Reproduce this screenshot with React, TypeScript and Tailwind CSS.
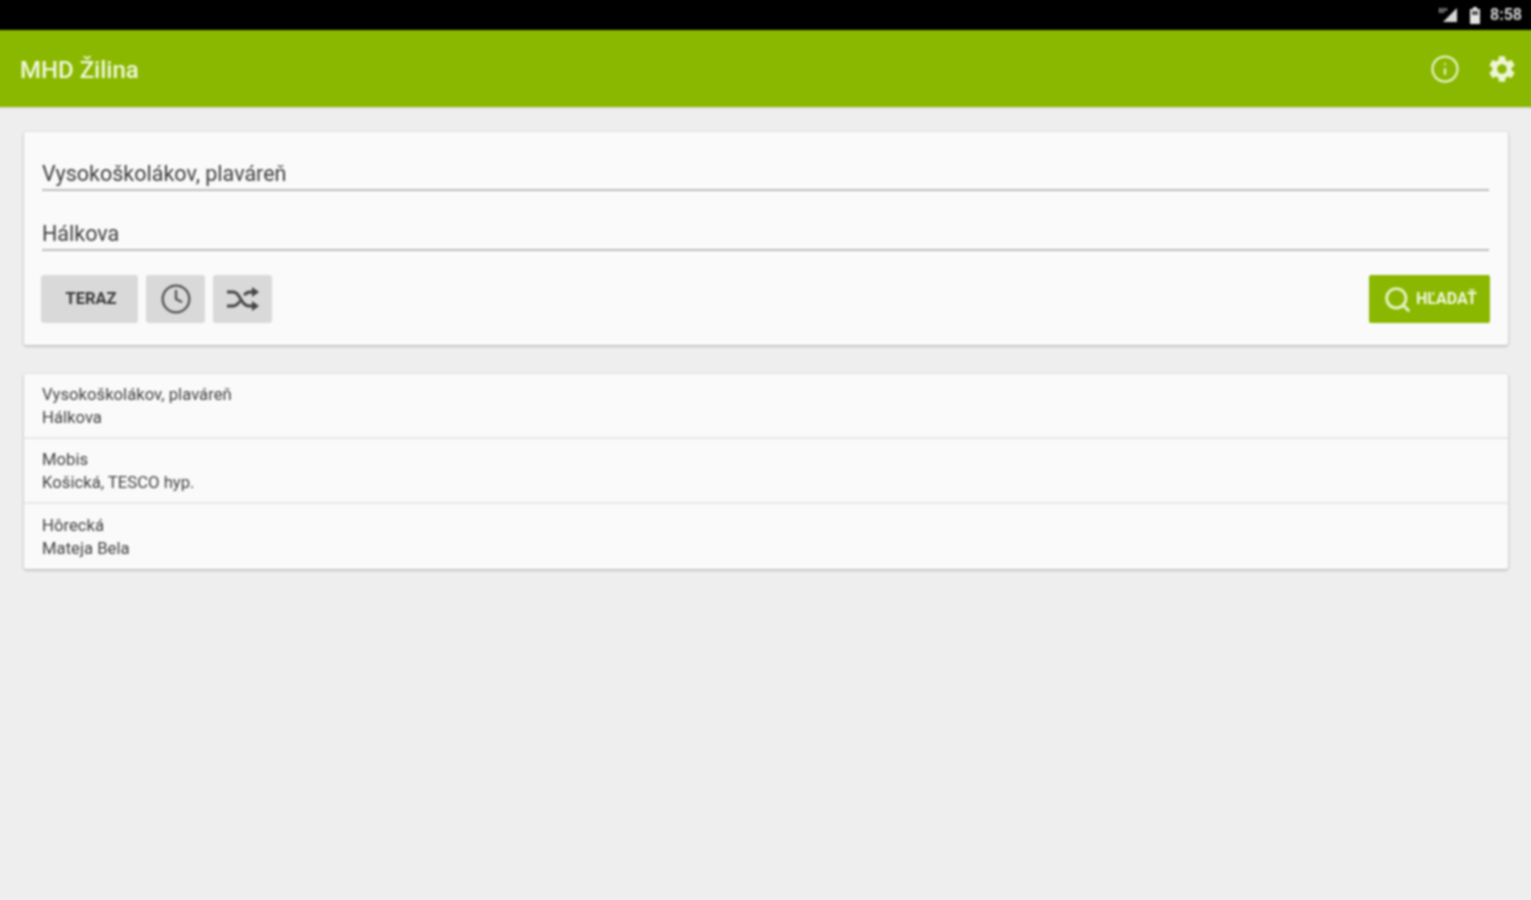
import { Clock, Info, Search } from 'lucide-react'
import { MdSettings } from 'react-icons/md'

const history = [
  { from: 'Vysokoškolákov, plaváreň', to: 'Hálkova' },
  { from: 'Mobis', to: 'Košická, TESCO hyp.' },
  { from: 'Hôrecká', to: 'Mateja Bela' },
]

function StatusBar() {
  return (
    <div className="h-[34px] pt-[4px] bg-black flex items-center justify-end pr-[13px]">
      {/* signal */}
      <svg width="20" height="16" viewBox="0 0 20 16" className="mr-[11px]">
        <path d="M19 1v14H5z" fill="#d8d8d8" />
        <path d="M1 1h2v5H1zM4 1h2v5H4zM7 1h2v3H7z" fill="#8f8f8f" />
      </svg>
      {/* battery */}
      <svg width="12" height="17" viewBox="0 0 12 17" className="mr-[9px]">
        <path d="M4 0h4v2h3v15H1V2h3z" fill="#e4e4e4" />
        <path d="M3 4h6v4H3z" fill="#555" />
      </svg>
      <span className="text-[16px] font-bold text-[#d4d4d4]">8:58</span>
    </div>
  )
}

function AppBar() {
  return (
    <header className="h-[77px] bg-[#8ab800] flex items-center justify-between pl-[24px] pr-[17px] shadow-[0_1px_2px_rgba(0,0,0,0.12)]">
      <h1 className="pt-[2px] text-[24px] font-medium text-[#f1f7dc]">MHD Žilina</h1>
      <div className="flex items-center gap-[26px]">
        <Info className="w-[30px] h-[30px] text-[#e6f1c4]" strokeWidth={1.8} />
        <MdSettings className="w-[32px] h-[32px] text-[#eef5d6]" />
      </div>
    </header>
  )
}

function Field({ value }: { value: string }) {
  return (
    <div className="h-[60px] flex items-end border-b-2 border-[#bdbdbd]">
      <span className="text-[21.5px] leading-[30px] text-[#3d3d3d]">{value}</span>
    </div>
  )
}

export default function App() {
  return (
    <div className="h-[900px] overflow-hidden bg-[#eeeeee]">
      {/* blur pretece cez okraj, aby okraje stranky nevybledli */}
      <div className="-m-[4px] min-h-[908px] bg-[#eeeeee] font-['Roboto',sans-serif] blur-[1px]">
        <StatusBar />
        <AppBar />
        <main className="pl-[28px] pr-[27px] pt-[25px] flex flex-col gap-[29px]">
          {/* vyhladavanie */}
          <section className="h-[213px] bg-[#fafafa] rounded-[2px] shadow-[0_1px_3px_rgba(0,0,0,0.3)] pl-[18px] pr-[19px]">
            <div className="-mt-[1px]">
              <Field value="Vysokoškolákov, plaváreň" />
              <Field value="Hálkova" />
            </div>
            <div className="flex items-start justify-between mt-[24px]">
              <div className="flex gap-[8px] -ml-[1px]">
                <button className="w-[97px] h-[48px] bg-[#d9d9d9] rounded-[3px] text-[16.5px] font-bold text-[#3a3a3a] pl-[3px]">
                  TERAZ
                </button>
                <button className="w-[59px] h-[48px] bg-[#d9d9d9] rounded-[3px] flex items-center justify-center">
                  <Clock className="w-[32px] h-[32px] text-[#505050]" strokeWidth={1.7} />
                </button>
                <button className="w-[59px] h-[48px] bg-[#d9d9d9] rounded-[3px] flex items-center justify-center">
                  {/* ikona shuffle s plnymi sipkami */}
                  <svg width="34" height="24" viewBox="0 0 34 24" fill="none" className="text-[#444444]">
                    <path d="M1 5h6c3 0 5 2 7 6l2 3c2 4 4 5 8 5h3M1 19h6c3 0 5-2 7-5M18 8c2-2 4-3 6-3h3" stroke="currentColor" strokeWidth="2.8" />
                    <path d="M26 0l7 5-7 5zM26 14l7 5-7 5z" fill="currentColor" />
                  </svg>
                </button>
              </div>
              <button className="w-[121px] h-[48px] bg-[#8ab800] rounded-[2px] flex items-center pl-[14px] gap-[4px] mr-[-1px]">
                <Search className="w-[29px] h-[29px] text-[#e6f1c4]" strokeWidth={2.4} />
                <span className="text-[16px] font-bold text-[#f1f7dc]">HĽADAŤ</span>
              </button>
            </div>
          </section>

          {/* historia */}
          <section className="bg-[#fafafa] rounded-[2px] shadow-[0_1px_3px_rgba(0,0,0,0.3)] divide-y-2 divide-[#e8e8e8]">
            {history.map((item) => (
              <div key={item.from} className="h-[65px] pl-[18px] pr-[19px] flex flex-col justify-center text-[16.7px] leading-[23px] text-[#404040]">
                <span>{item.from}</span>
                <span>{item.to}</span>
              </div>
            ))}
          </section>
        </main>
      </div>
    </div>
  )
}
